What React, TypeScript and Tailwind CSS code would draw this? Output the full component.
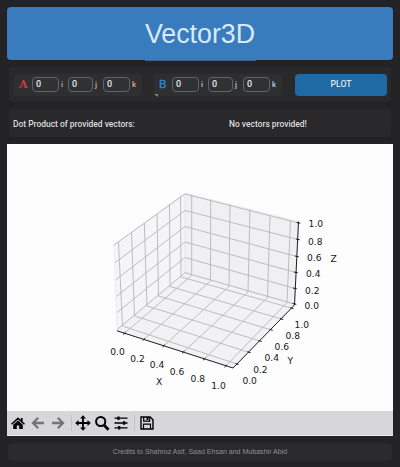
import { ReactNode } from "react";

type Line = [number, number, number, number];

const backWall: Line[] = [
  [191.7, 194.8, 191.7, 275.5], [210.7, 199.4, 210.5, 281], [230, 204.3, 229, 286.5],
  [250, 209.6, 248, 292], [270, 214.9, 267.5, 297.5], [290.5, 220.3, 287, 302.5],
];
const sideWall: Line[] = [
  [118.5, 242, 122.5, 326], [131.5, 232.4, 134.5, 316], [144.3, 223, 147, 306],
  [157, 213.8, 158.5, 296], [169.5, 204.6, 170, 286.5], [180.5, 196.7, 181, 277],
];
const floorX: Line[] = [
  [124.5, 333.2, 191.7, 275.5], [144, 339.3, 210.5, 281], [164, 345.7, 229, 286.5],
  [183.5, 352, 248, 292], [204.5, 358.8, 267.5, 297.5], [226, 365.8, 287, 302.5],
];
const floorY: Line[] = [
  [122.5, 326, 237, 364], [134.5, 316, 249, 352.3], [147, 306, 260, 341],
  [158.5, 296, 271, 329.8], [170, 286.5, 281.5, 319], [181, 277, 291.8, 308.2],
];
const levels = [
  "114,245 185,194 298.5,223", "115,262.7 185,210.5 298,239.5", "115.5,280 185,226.5 297,256.5",
  "116.3,296.5 185,242 296,272.5", "117,312.5 185,257.5 295,288.5", "117.7,329 185,272.7 294.5,304",
];
const labels: [number, number, string][] = [
  [110.3, 355, "0.0"], [130.3, 362, "0.2"], [149.8, 368.3, "0.4"], [169.8, 375, "0.6"], [190.6, 381.7, "0.8"], [211.3, 389, "1.0"],
  [242.4, 384.2, "0.0"], [253.2, 372.6, "0.2"], [264.5, 361, "0.4"], [274.6, 349.6, "0.6"], [285.5, 339, "0.8"], [294.6, 328.3, "1.0"],
  [304.5, 308.8, "0.0"], [305, 293.5, "0.2"], [306, 277.3, "0.4"], [307, 260.8, "0.6"], [308, 244.8, "0.8"], [308.6, 227.3, "1.0"],
  [156, 385, "X"], [287.5, 364, "Y"], [330.5, 262.3, "Z"],
];

function Segments({ lines }: { lines: Line[] }) {
  return <>{lines.map(([a, b, c, d]) => <line key={`${a}-${b}`} x1={a} y1={b} x2={c} y2={d} />)}</>;
}

function Plot() {
  return (
    <svg className="block h-[267px] w-[386px] bg-[#fdfdfe]" viewBox="7 144 386 267">
      <g stroke="#eae9ec" strokeWidth=".8">
        <path d="M114 245 185 193 185 273 117 331Z" fill="#f5f4f6" />
        <path d="M185 193 299 221.5 294.5 305 185 273Z" fill="#f0f0f2" />
        <path d="M117 331 185 273 294.5 305 233 368Z" fill="#f2f2f4" />
      </g>
      <g stroke="#b9b9ba" strokeWidth=".95" fill="none">
        <Segments lines={backWall} />
        <Segments lines={sideWall} />
        <Segments lines={floorX} />
        <Segments lines={floorY} />
        {levels.map((p) => <polyline key={p} points={p} />)}
      </g>
      <g stroke="#1f1f20" strokeWidth="1" fill="none">
        <path d="M117 330.8 233 368 294.5 305 298.5 221.5" />
        {floorX.map(([x, y]) => <path key={x} d={`M${x + 1} ${y - 1}l-2.5 2.4`} />)}
        {floorY.map(([, , x, y]) => <path key={x} d={`M${x - 1.5} ${y - 0.5}l3.2 1`} />)}
        {levels.map((p) => {
          const [x, y] = p.split(" ")[2].split(",").map(Number);
          return <path key={p} d={`M${x - 2} ${y - 0.5}l3.8 .8`} />;
        })}
      </g>
      <g fill="#161617" className="font-['DejaVu_Sans',sans-serif] text-[9.1px]">
        {labels.map(([x, y, t]) => <text key={`${x}${t}`} x={x} y={y}>{t}</text>)}
      </g>
    </svg>
  );
}

function VectorInput({ name, color, tint, serif }: { name: string; color: string; tint: string; serif?: boolean }) {
  return (
    <div className="flex h-[22px] w-[128px] shrink-0 items-center rounded-[4px] bg-[#2e2f31] pl-[5px]">
      <span className={`w-[13px] shrink-0 leading-none ${color} ${serif ? "font-['DejaVu_Serif',serif] text-[11px] font-bold" : "font-['DejaVu_Sans',sans-serif] text-[11px] font-medium [-webkit-text-stroke:0.4px]"}`}>{name}</span>
      {["i", "j", "k"].map((axis, n) => (
        <div key={axis} className={`flex items-center ${n === 1 ? "w-[35px]" : "w-[36px]"}`}>
          <div className={`flex h-[15px] shrink-0 items-center rounded-[4px] border border-[#626366] bg-[#303133] pl-[3px] text-[9px] font-medium text-[#e4e7ea] ${n === 1 ? "w-[25px]" : "w-[27px]"}`}>0</div>
          <span className={`pl-[2px] text-[7.5px] leading-none font-bold ${tint}`}>{axis}</span>
        </div>
      ))}
    </div>
  );
}

function Icon({ className, children }: { className: string; children: ReactNode }) {
  return <svg viewBox="0 0 16 16" className={`h-4 w-4 shrink-0 ${className}`}>{children}</svg>;
}

function Toolbar() {
  return (
    <div className="flex h-[25px] items-center border-b border-[#eeeeef] bg-[#d7d7d9] pl-[3px] text-black">
      <Icon className=""><path fill="currentColor" d="M8 2.3 1 8.7l1 1 6-5.3 6 5.3 1-1-2.4-2.2V3h-1.8v1.9ZM8 5.5 3.2 9.7V14h3.6v-3.6h2.4V14h3.6V9.7Z" /></Icon>
      <Icon className="ml-1 text-[#757577]"><path d="M14 8H3M8.2 2.8 3 8l5.2 5.2" fill="none" stroke="currentColor" strokeWidth="2.3" /></Icon>
      <Icon className="ml-1 text-[#757577]"><path d="M2 8h11M7.8 2.8 13 8l-5.2 5.2" fill="none" stroke="currentColor" strokeWidth="2.3" /></Icon>
      <div className="ml-[5px] h-4 w-px bg-[#c3c3c6]" />
      <Icon className="ml-[3px]"><path d="M2 8h12M8 2v12" stroke="currentColor" strokeWidth="1.8" /><path fill="currentColor" d="m8 .2 3 3.3H5ZM8 15.8l-3-3.3h6ZM.2 8l3.3-3v6ZM15.8 8l-3.3 3V5Z" /></Icon>
      <Icon className="ml-[3px]"><circle cx="6.7" cy="6.5" r="4.6" fill="none" stroke="currentColor" strokeWidth="2" /><path d="m10 10 4.5 4.7" stroke="currentColor" strokeWidth="2.7" /></Icon>
      <Icon className="ml-[3px]"><path d="M1.5 3.2h13M1.5 8h13M1.5 12.8h13" stroke="currentColor" strokeWidth="1.3" /><path d="M5.5 1.5v3.4M11 6.3v3.4M6.2 11.1v3.4" stroke="currentColor" strokeWidth="2.2" /></Icon>
      <div className="ml-[5px] h-4 w-px bg-[#c3c3c6]" />
      <Icon className="ml-1"><path d="M2 2h9.2L14 4.8V14H2Z" fill="none" stroke="currentColor" strokeWidth="1.4" /><path d="M4.7 2v4.2h6V2M4.5 14V9.2h7V14" fill="none" stroke="currentColor" strokeWidth="1.2" /><path d="M7.5 2h2v3h-2Z" fill="currentColor" /></Icon>
    </div>
  );
}

export default function App() {
  return (
    <main className="h-[467px] w-[400px] overflow-hidden bg-[#232225] px-[7px] pt-[7px] font-[Roboto,sans-serif]">
      <header className="flex h-[53px] items-center justify-center rounded-[4px] bg-[#397cbe] pt-px font-['Liberation_Sans',sans-serif] text-[26.8px] text-[#d8e9f7]">Vector3D</header>
      <div className="mx-auto h-px w-[111px] bg-[#316898]" />
      <section className="mx-[2px] mt-[6px] flex h-[35px] items-center rounded-[4px] bg-[#29292b] pl-[5px]">
        <VectorInput name="A" color="text-[#d83636]" tint="text-[#d79692]" serif />
        <div className="relative ml-[12px]">
          <VectorInput name="B" color="text-[#2786cf]" tint="text-[#99bfe2]" />
          <span className="absolute bottom-[-1px] left-0 h-0 w-0 border-t-[3px] border-l-[4px] border-t-[#858587] border-l-transparent" />
        </div>
        <button className="ml-[13px] h-[22px] w-[92px] shrink-0 rounded-[4px] bg-[#1f69a5] text-[8.7px] font-medium text-[#dce8f0]">PLOT</button>
      </section>
      <section className="mx-[2px] mt-[7px] flex h-[28px] items-center rounded-[4px] bg-[#29282b] pt-[2px] pl-[4px] text-[8.45px] font-medium text-[#dcdddf]">
        <span className="w-[216px]">Dot Product of provided vectors:</span>
        <span>No vectors provided!</span>
      </section>
      <section className="mt-[7px]">
        <Plot />
        <Toolbar />
      </section>
      <footer className="mx-[1px] mt-[7px] flex h-[18px] items-center justify-center rounded-[4px] bg-[#2a292c] font-['Liberation_Sans',sans-serif] text-[7.05px] text-[#919193]">Credits to Shahroz Asif, Saad Ehsan and Mubashir Abid</footer>
    </main>
  );
}
